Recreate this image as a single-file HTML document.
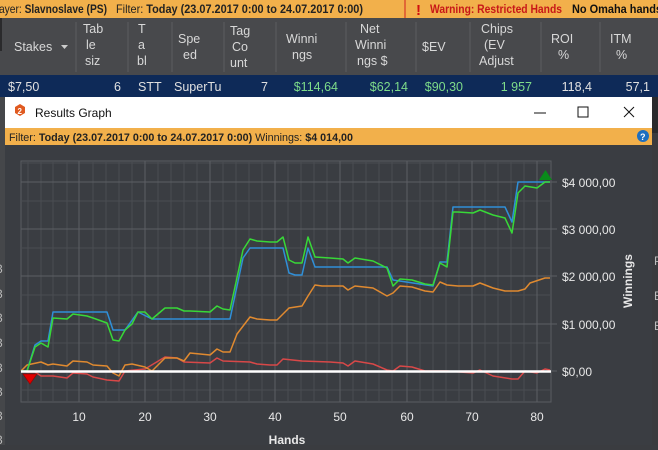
<!DOCTYPE html><html><head><meta charset="utf-8"><style>
body{margin:0;width:658px;height:445px;overflow:hidden;background:#3a3c40;font-family:"Liberation Sans",sans-serif;}
</style></head><body>
<svg width="658" height="445" xmlns="http://www.w3.org/2000/svg" font-family="Liberation Sans, sans-serif">
<rect width="658" height="445" fill="#3d3f43"/>
<!-- top bar -->
<rect x="0" y="0" width="658" height="18" fill="#f2b04b"/>
<text x="-1" y="13" font-size="12" fill="#222" textLength="108" lengthAdjust="spacingAndGlyphs">ayer: <tspan font-weight="bold">Slavnoslave (PS)</tspan></text>
<text x="116" y="13" font-size="12" fill="#222" textLength="247" lengthAdjust="spacingAndGlyphs">Filter: <tspan font-weight="bold">Today (23.07.2017 0:00 to 24.07.2017 0:00)</tspan></text>
<rect x="405" y="-1" width="260" height="20" fill="#f2b04b" stroke="#d02020" stroke-width="1"/>
<text x="416" y="15" font-size="15" font-weight="bold" fill="#d01010">!</text>
<text x="430" y="13" font-size="12" font-weight="bold" fill="#c81818" textLength="132" lengthAdjust="spacingAndGlyphs">Warning: Restricted Hands</text>
<text x="572" y="13" font-size="12" font-weight="bold" fill="#111" textLength="90" lengthAdjust="spacingAndGlyphs">No Omaha hands</text>
<!-- header -->
<rect x="0" y="18" width="658" height="57" fill="#48494c"/>
<rect x="0" y="18" width="2" height="33" fill="#2a2a2c"/>
<g fill="#d8d8d8" font-size="12.5">
<text x="14" y="51">Stakes</text><path d="M61 45h7l-3.5 4z" fill="#ccc"/>
<text x="83" y="33">Tab</text><text x="86" y="49">le</text><text x="85" y="65">siz</text>
<text x="138" y="33">T</text><text x="138" y="49">a</text><text x="137" y="65">bl</text>
<text x="178" y="43">Spe</text><text x="183" y="59">ed</text>
<text x="230" y="35">Tag</text><text x="232" y="51">Co</text><text x="230" y="67">unt</text>
<text x="286" y="43">Winni</text><text x="292" y="59">ngs</text>
<text x="360" y="33">Net</text><text x="355" y="49">Winni</text><text x="357" y="65">ngs $</text>
<text x="422" y="51">$EV</text>
<text x="481" y="33">Chips</text><text x="484" y="49">(EV</text><text x="479" y="65">Adjust</text>
<text x="551" y="43">ROI</text><text x="558" y="59">%</text>
<text x="610" y="43">ITM</text><text x="616" y="59">%</text>
</g>
<g stroke="#5c5d60"><path d="M76 22v50M128 22v50M172 22v50M224 22v50M276 22v50M346 22v50M416 22v50M470 22v50M541 22v50M600 22v50"/></g>
<!-- selected row -->
<rect x="0" y="75" width="658" height="22" fill="#0e2a58"/>
<g font-size="12.5" fill="#e0e0e0">
<text x="8" y="91">$7,50</text><text x="121" y="91" text-anchor="end">6</text><text x="138" y="91">STT</text><text x="174" y="91">SuperTu</text><text x="268" y="91" text-anchor="end">7</text>
<text x="338" y="91" text-anchor="end" fill="#7edc8a">$114,64</text><text x="408" y="91" text-anchor="end" fill="#7edc8a">$62,14</text><text x="463" y="91" text-anchor="end" fill="#7edc8a">$90,30</text><text x="532" y="91" text-anchor="end" fill="#7edc8a">1 957</text>
<text x="592" y="91" text-anchor="end">118,4</text><text x="650" y="91" text-anchor="end">57,1</text>
</g>
<!-- right side under table -->
<rect x="652" y="97" width="6" height="348" fill="#3a3b3e"/>
<rect x="652" y="97" width="6" height="36" fill="#2a2b2d"/>
<g font-size="12" fill="#bbb"><text x="654" y="265">P</text><text x="654" y="300">B</text><text x="654" y="330">B</text></g>
<!-- left side under table -->
<rect x="0" y="97" width="5" height="348" fill="#45474a"/>
<g font-size="12" fill="#bbb"><text x="-4" y="273">3</text><text x="-4" y="298">3</text><text x="-4" y="322">3</text><text x="-4" y="347">3</text><text x="-4" y="372">3</text><text x="-4" y="396">3</text><text x="-4" y="420">3</text><text x="-4" y="444">3</text></g>
<!-- dialog -->
<rect x="5" y="97" width="647" height="348" fill="#3a3d42"/>
<rect x="5" y="97" width="647" height="31" fill="#ffffff"/>
<path d="M15 107l5-3 5 3v6l-5 3-5-3z" fill="#e05a20"/><text x="17.5" y="114" font-size="8" font-weight="bold" fill="#fff">2</text>
<text x="35" y="117" font-size="12" fill="#111">Results Graph</text>
<path d="M534 113h12" stroke="#111"/><rect x="578" y="107" width="10" height="10" fill="none" stroke="#111"/>
<path d="M624 107l10 10M634 107l-10 10" stroke="#111"/>
<rect x="5" y="128" width="647" height="17" fill="#f2b04b"/>
<text x="9" y="141" font-size="11" fill="#222" textLength="344" lengthAdjust="spacingAndGlyphs">Filter: <tspan font-weight="bold">Today (23.07.2017 0:00 to 24.07.2017 0:00)</tspan> Winnings: <tspan font-weight="bold">$4 014,00</tspan></text>
<circle cx="643" cy="136" r="6" fill="#1e6fc0"/><text x="640" y="140" font-size="9" font-weight="bold" fill="#fff">?</text>
<!-- grid -->
<rect x="21" y="161" width="530" height="241" fill="#3a3d42" stroke="#5a5d62"/>
<g stroke="#4a4d52" stroke-width="1">
<path d="M28 161v241M41 161v241M53 161v241M67 161v241M93 161v241M106 161v241M119 161v241M132 161v241M158 161v241M171 161v241M184 161v241M197 161v241M223 161v241M236 161v241M249 161v241M262 161v241M288 161v241M301 161v241M314 161v241M327 161v241M353 161v241M366 161v241M379 161v241M392 161v241M420 161v241M433 161v241M446 161v241M459 161v241M485 161v241M498 161v241M511 161v241M524 161v241"/>
<path d="M21 201h530M21 248h530M21 295h530M21 343h530M21 390h530M21 163h530"/>
</g>
<g stroke="#5c5f64">
<path d="M79 161v241M145 161v241M210 161v241M275 161v241M340 161v241M407 161v241M472 161v241M537 161v241"/>
<path d="M21 182h530M21 229h530M21 276h530M21 324h530"/>
<path d="M551 182h6M551 229h6M551 276h6M551 324h6M551 371h6"/>
</g>
<g fill="none" stroke-width="1.5" stroke-linejoin="round">
<polyline stroke="#d84848" points="21,371 27,372 35,372 41,376 53,376 67,378 73,373 87,374 93,377 107,380 119,381 125,371 145,369 165,357 177,358 184,362 210,363 217,358 223,361 250,362 257,364 270,365 277,365 283,359 302,361 330,362 343,363 348,366 355,361 373,364 387,370 393,371 400,366 412,367 425,371 447,371 460,372 473,373 480,370 493,376 512,379 518,379 525,371 537,373 545,369 550,370"/>
<polyline stroke="#e08a30" points="21,371 27,365 41,362 48,365 53,364 67,366 73,361 87,362 93,365 107,366 113,373 119,376 125,365 132,364 145,367 152,371 165,358 177,358 184,361 190,353 210,355 217,349 223,352 230,352 237,334 250,317 257,319 270,320 277,320 289,308 302,306 308,296 315,285 322,286 330,286 343,286 348,290 355,286 373,288 387,296 393,293 400,286 412,287 425,291 433,292 440,282 447,285 458,286 473,286 480,283 493,288 505,291 518,291 525,289 530,283 545,278 550,278"/>
<polyline stroke="#2f8fd8" points="21,371 27,371 35,345 41,341 48,341 53,312 107,312 113,330 125,330 138,312 152,319 230,319 243,258 250,248 283,248 289,273 295,275 302,275 308,248 315,267 330,267 387,267 393,280 433,286 440,262 447,262 453,207 505,207 512,222 518,182 550,182"/>
<polyline stroke="#38d838" points="21,371 27,371 35,347 41,343 48,347 53,318 67,319 73,314 87,316 93,318 107,323 113,340 119,341 125,330 132,324 138,312 145,312 152,319 165,308 177,308 184,311 190,311 210,312 217,306 223,309 230,310 243,250 250,239 257,241 270,242 277,242 283,237 289,260 295,263 302,263 308,237 315,257 330,258 343,259 348,263 355,258 373,261 387,268 393,286 400,279 412,280 425,284 433,285 440,263 447,267 453,212 458,212 473,213 480,210 493,215 505,218 512,233 518,193 525,186 537,188 545,182 550,182"/>
</g>
<path d="M21 371.5h530" stroke="#fff" stroke-width="2.5"/>
<path d="M23 374h14l-7 10z" fill="#e00000" stroke="#900" stroke-width="0.7"/>
<path d="M539 180h13l-6.5-10z" fill="#0a8a1a"/>
<g font-size="12" fill="#e8e8e8">
<text x="562" y="187">$4 000,00</text><text x="562" y="234">$3 000,00</text><text x="562" y="281">$2 000,00</text><text x="562" y="329">$1 000,00</text><text x="562" y="376">$0,00</text>
<text x="79" y="421" text-anchor="middle">10</text><text x="145" y="421" text-anchor="middle">20</text><text x="210" y="421" text-anchor="middle">30</text><text x="275" y="421" text-anchor="middle">40</text><text x="340" y="421" text-anchor="middle">50</text><text x="407" y="421" text-anchor="middle">60</text><text x="472" y="421" text-anchor="middle">70</text><text x="537" y="421" text-anchor="middle">80</text>
<text x="287" y="444" text-anchor="middle" font-weight="bold">Hands</text>
<text transform="translate(632,308) rotate(-90)" font-weight="bold">Winnings</text>
</g>
</svg>
</body></html>
